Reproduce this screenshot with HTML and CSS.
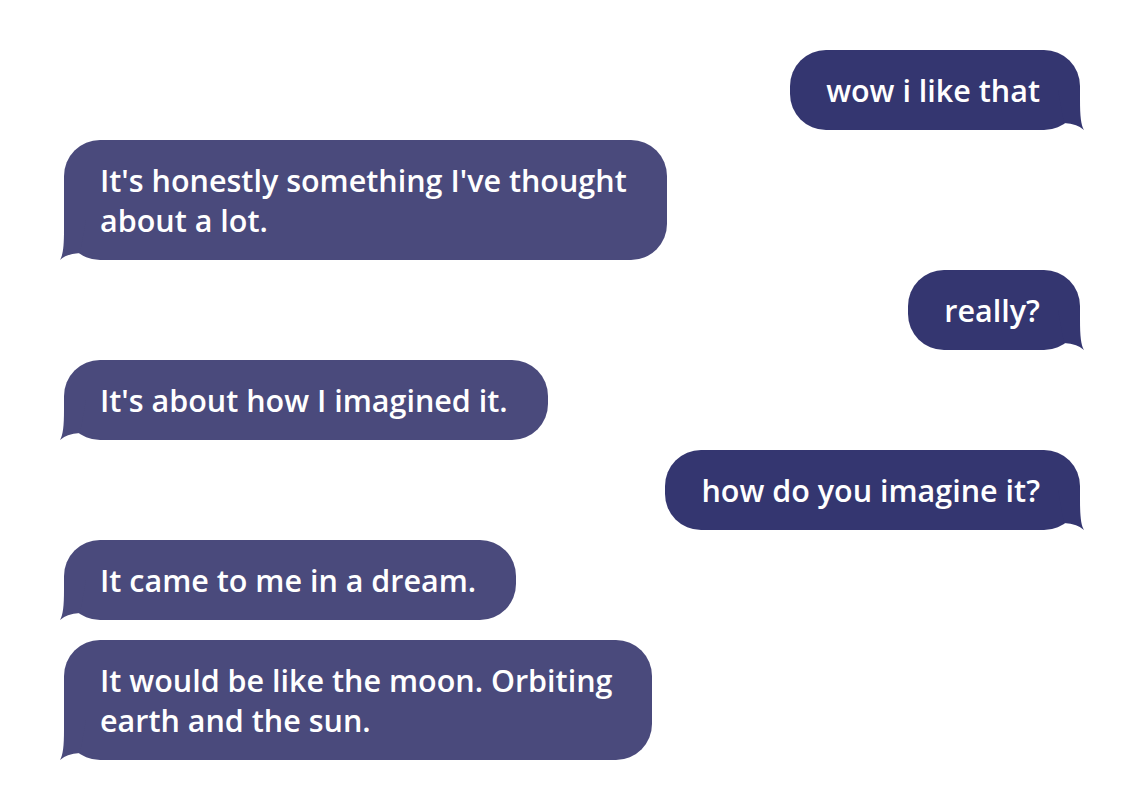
FILE: index.html
```html
<!DOCTYPE html>
<html lang="en">
<head>
<meta charset="utf-8">
<title>Chat</title>
<link rel="stylesheet" href="styles.css">
</head>
<body>
<main class="chat">
  <div class="msg sent"><span>wow i like that</span><svg class="tail" viewBox="-40 -40 44 40" aria-hidden="true"><path d="M-22 -40 L0 -40 L0 -30 C0 -14 1 -5 4 0 Q-2 -6 -16 -7 Z"/></svg></div>
  <div class="msg recv"><span>It's honestly something I've thought<br>about a lot.</span><svg class="tail" viewBox="-40 -40 44 40" aria-hidden="true"><path d="M-22 -40 L0 -40 L0 -30 C0 -14 1 -5 4 0 Q-2 -6 -16 -7 Z"/></svg></div>
  <div class="msg sent"><span>really?</span><svg class="tail" viewBox="-40 -40 44 40" aria-hidden="true"><path d="M-22 -40 L0 -40 L0 -30 C0 -14 1 -5 4 0 Q-2 -6 -16 -7 Z"/></svg></div>
  <div class="msg recv"><span>It's about how I imagined it.</span><svg class="tail" viewBox="-40 -40 44 40" aria-hidden="true"><path d="M-22 -40 L0 -40 L0 -30 C0 -14 1 -5 4 0 Q-2 -6 -16 -7 Z"/></svg></div>
  <div class="msg sent"><span>how do you imagine it?</span><svg class="tail" viewBox="-40 -40 44 40" aria-hidden="true"><path d="M-22 -40 L0 -40 L0 -30 C0 -14 1 -5 4 0 Q-2 -6 -16 -7 Z"/></svg></div>
  <div class="msg recv"><span>It came to me in a dream.</span><svg class="tail" viewBox="-40 -40 44 40" aria-hidden="true"><path d="M-22 -40 L0 -40 L0 -30 C0 -14 1 -5 4 0 Q-2 -6 -16 -7 Z"/></svg></div>
  <div class="msg recv spaced"><span>It would be like the moon. Orbiting<br>earth and the sun.</span><svg class="tail" viewBox="-40 -40 44 40" aria-hidden="true"><path d="M-22 -40 L0 -40 L0 -30 C0 -14 1 -5 4 0 Q-2 -6 -16 -7 Z"/></svg></div>
</main>
</body>
</html>
```
FILE: styles.css
```css
html, body {
  margin: 0;
  padding: 0;
  background: #ffffff;
}

body {
  font-family: "Open Sans", "Noto Sans", sans-serif;
  width: 1136px;
  height: 807px;
  overflow: hidden;
}

.chat {
  display: flex;
  flex-direction: column;
  gap: 10px;
  padding: 50px 56px 0 64px;
}

.msg {
  position: relative;
  box-sizing: border-box;
  padding: 20px 40px 20px 36px;
  border-radius: 36px;
  color: #ffffff;
  font-size: 30.5px;
  font-weight: 600;
  line-height: 40px;
  white-space: nowrap;
}

.msg span {
  display: block;
}

.sent {
  align-self: flex-end;
  background: #343670;
  fill: #343670;
}

.recv {
  align-self: flex-start;
  background: #4a4a7c;
  fill: #4a4a7c;
}

.spaced {
  margin-top: 10px;
}

.tail {
  position: absolute;
  bottom: 0;
  width: 44px;
  height: 40px;
  overflow: visible;
}

.sent .tail {
  right: -4px;
}

.recv .tail {
  left: -4px;
  transform: scaleX(-1);
}
```
